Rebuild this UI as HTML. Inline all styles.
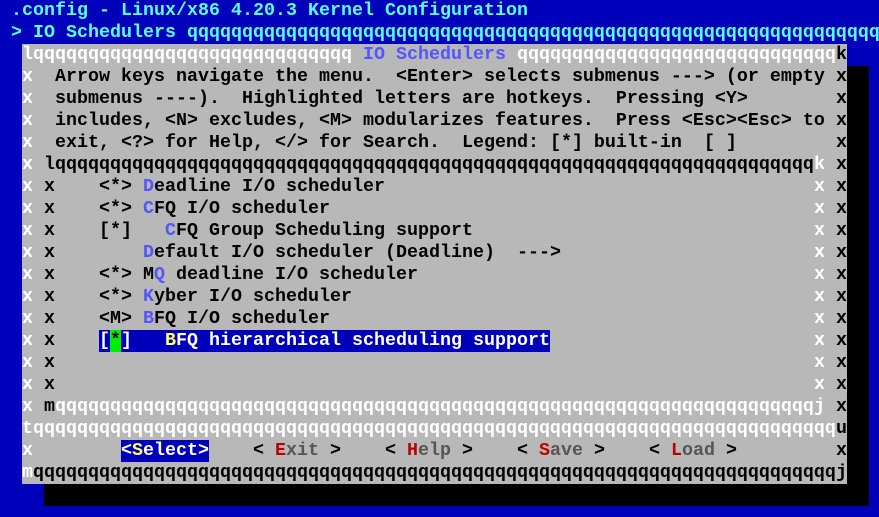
<!DOCTYPE html>
<html><head><meta charset="utf-8"><style>
html,body{margin:0;padding:0}
body{width:879px;height:517px;background:#0000bb;overflow:hidden;position:relative;font-family:"Liberation Mono",monospace;font-weight:bold;font-size:18.33px;line-height:22px}
.r{position:absolute;height:22px;white-space:pre;overflow:hidden}
.w{color:#fff}.k{color:#000}.c{color:#55ffff}.b{color:#5555ff}.y{color:#ffff55}.rd{color:#c00000}.g{color:#555}
.bg{position:absolute}
</style></head><body>
<div class="bg" style="left:22px;top:44px;width:825px;height:440px;background:#b8b8b8"></div>
<div class="bg" style="left:847px;top:66px;width:22px;height:440px;background:#000"></div>
<div class="bg" style="left:44px;top:484px;width:825px;height:22px;background:#000"></div>
<div class="bg" style="left:99px;top:330px;width:451px;height:22px;background:#0000bb"></div>
<div class="bg" style="left:110px;top:330px;width:11px;height:22px;background:#00ee00"></div>
<div class="bg" style="left:121px;top:440px;width:88px;height:22px;background:#0000bb"></div>

<div class="r c" style="left:11px;top:0">.config - Linux/x86 4.20.3 Kernel Configuration</div>
<div class="r c" style="left:11px;top:22px;width:868px">&gt; IO Schedulers qqqqqqqqqqqqqqqqqqqqqqqqqqqqqqqqqqqqqqqqqqqqqqqqqqqqqqqqqqqqqqqqqqqqqqqqqqqqqqqqqqqqqqqq</div>

<div class="r w" style="left:22px;top:44px;width:330px">lqqqqqqqqqqqqqqqqqqqqqqqqqqqqqqqqqqqqqqqqqqqqqqqqqqqq</div>
<div class="r b" style="left:352px;top:44px"> IO Schedulers </div>
<div class="r w" style="left:517px;top:44px;width:319px">qqqqqqqqqqqqqqqqqqqqqqqqqqqqqqqqqqqqqqqqqqqqqqqq</div>
<div class="r k" style="left:836px;top:44px">k</div>

<div class="r w" style="left:22px;top:66px">x</div><div class="r k" style="left:55px;top:66px">Arrow keys navigate the menu.  &lt;Enter&gt; selects submenus ---&gt; (or empty</div><div class="r k" style="left:836px;top:66px">x</div>
<div class="r w" style="left:22px;top:88px">x</div><div class="r k" style="left:55px;top:88px">submenus ----).  Highlighted letters are hotkeys.  Pressing &lt;Y&gt;</div><div class="r k" style="left:836px;top:88px">x</div>
<div class="r w" style="left:22px;top:110px">x</div><div class="r k" style="left:55px;top:110px">includes, &lt;N&gt; excludes, &lt;M&gt; modularizes features.  Press &lt;Esc&gt;&lt;Esc&gt; to</div><div class="r k" style="left:836px;top:110px">x</div>
<div class="r w" style="left:22px;top:132px">x</div><div class="r k" style="left:55px;top:132px">exit, &lt;?&gt; for Help, &lt;/&gt; for Search.  Legend: [*] built-in  [ ]</div><div class="r k" style="left:836px;top:132px">x</div>

<div class="r w" style="left:22px;top:154px">x</div>
<div class="r k" style="left:44px;top:154px;width:770px">lqqqqqqqqqqqqqqqqqqqqqqqqqqqqqqqqqqqqqqqqqqqqqqqqqqqqqqqqqqqqqqqqqqqqqqqqqqqqqqqqq</div>
<div class="r w" style="left:814px;top:154px">k</div><div class="r k" style="left:836px;top:154px">x</div>

<div class="r w" style="left:22px;top:176px">x</div><div class="r k" style="left:44px;top:176px">x</div><div class="r w" style="left:814px;top:176px">x</div><div class="r k" style="left:836px;top:176px">x</div>
<div class="r w" style="left:22px;top:198px">x</div><div class="r k" style="left:44px;top:198px">x</div><div class="r w" style="left:814px;top:198px">x</div><div class="r k" style="left:836px;top:198px">x</div>
<div class="r w" style="left:22px;top:220px">x</div><div class="r k" style="left:44px;top:220px">x</div><div class="r w" style="left:814px;top:220px">x</div><div class="r k" style="left:836px;top:220px">x</div>
<div class="r w" style="left:22px;top:242px">x</div><div class="r k" style="left:44px;top:242px">x</div><div class="r w" style="left:814px;top:242px">x</div><div class="r k" style="left:836px;top:242px">x</div>
<div class="r w" style="left:22px;top:264px">x</div><div class="r k" style="left:44px;top:264px">x</div><div class="r w" style="left:814px;top:264px">x</div><div class="r k" style="left:836px;top:264px">x</div>
<div class="r w" style="left:22px;top:286px">x</div><div class="r k" style="left:44px;top:286px">x</div><div class="r w" style="left:814px;top:286px">x</div><div class="r k" style="left:836px;top:286px">x</div>
<div class="r w" style="left:22px;top:308px">x</div><div class="r k" style="left:44px;top:308px">x</div><div class="r w" style="left:814px;top:308px">x</div><div class="r k" style="left:836px;top:308px">x</div>
<div class="r w" style="left:22px;top:330px">x</div><div class="r k" style="left:44px;top:330px">x</div><div class="r w" style="left:814px;top:330px">x</div><div class="r k" style="left:836px;top:330px">x</div>
<div class="r w" style="left:22px;top:352px">x</div><div class="r k" style="left:44px;top:352px">x</div><div class="r w" style="left:814px;top:352px">x</div><div class="r k" style="left:836px;top:352px">x</div>
<div class="r w" style="left:22px;top:374px">x</div><div class="r k" style="left:44px;top:374px">x</div><div class="r w" style="left:814px;top:374px">x</div><div class="r k" style="left:836px;top:374px">x</div>

<div class="r k" style="left:99px;top:176px">&lt;*&gt; <span class="b">D</span>eadline I/O scheduler</div>
<div class="r k" style="left:99px;top:198px">&lt;*&gt; <span class="b">C</span>FQ I/O scheduler</div>
<div class="r k" style="left:99px;top:220px">[*]   <span class="b">C</span>FQ Group Scheduling support</div>
<div class="r k" style="left:99px;top:242px">    <span class="b">D</span>efault I/O scheduler (Deadline)  ---&gt;</div>
<div class="r k" style="left:99px;top:264px">&lt;*&gt; M<span class="b">Q</span> deadline I/O scheduler</div>
<div class="r k" style="left:99px;top:286px">&lt;*&gt; <span class="b">K</span>yber I/O scheduler</div>
<div class="r k" style="left:99px;top:308px">&lt;M&gt; <span class="b">B</span>FQ I/O scheduler</div>
<div class="r w" style="left:99px;top:330px">[<span class="k">*</span>]   <span class="y">B</span>FQ hierarchical scheduling support</div>

<div class="r w" style="left:22px;top:396px">x</div><div class="r k" style="left:44px;top:396px">m</div>
<div class="r w" style="left:55px;top:396px;width:759px">qqqqqqqqqqqqqqqqqqqqqqqqqqqqqqqqqqqqqqqqqqqqqqqqqqqqqqqqqqqqqqqqqqqqqqqqqqqqqqqqq</div>
<div class="r w" style="left:814px;top:396px">j</div><div class="r k" style="left:836px;top:396px">x</div>

<div class="r w" style="left:22px;top:418px;width:814px">tqqqqqqqqqqqqqqqqqqqqqqqqqqqqqqqqqqqqqqqqqqqqqqqqqqqqqqqqqqqqqqqqqqqqqqqqqqqqqqqqqqqq</div>
<div class="r k" style="left:836px;top:418px">u</div>

<div class="r w" style="left:22px;top:440px">x</div>
<div class="r w" style="left:121px;top:440px">&lt;<span class="y">S</span>elect&gt;</div>
<div class="r k" style="left:253px;top:440px">&lt; <span class="rd">E</span><span class="g">xit</span> &gt;</div>
<div class="r k" style="left:385px;top:440px">&lt; <span class="rd">H</span><span class="g">elp</span> &gt;</div>
<div class="r k" style="left:517px;top:440px">&lt; <span class="rd">S</span><span class="g">ave</span> &gt;</div>
<div class="r k" style="left:649px;top:440px">&lt; <span class="rd">L</span><span class="g">oad</span> &gt;</div>
<div class="r k" style="left:836px;top:440px">x</div>

<div class="r w" style="left:22px;top:462px">m</div>
<div class="r k" style="left:33px;top:462px;width:803px">qqqqqqqqqqqqqqqqqqqqqqqqqqqqqqqqqqqqqqqqqqqqqqqqqqqqqqqqqqqqqqqqqqqqqqqqqqqqqqqqqqqq</div>
<div class="r k" style="left:836px;top:462px">j</div>
</body></html>
